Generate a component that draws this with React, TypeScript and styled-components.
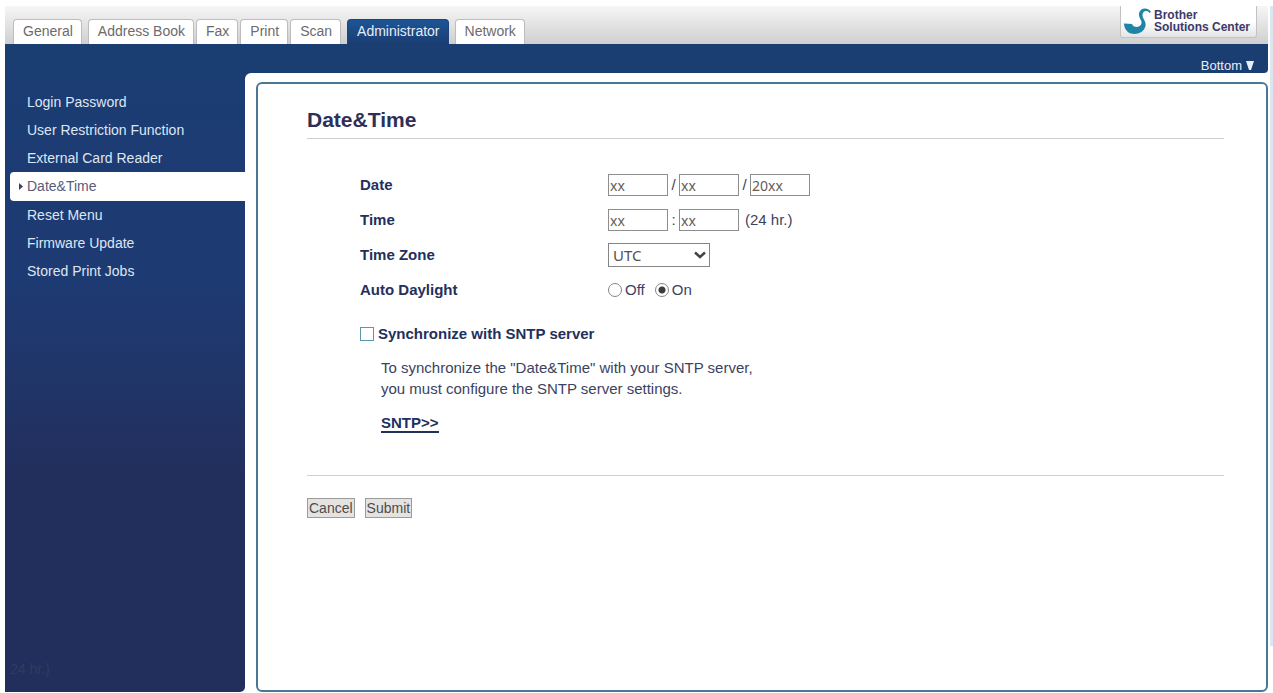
import React from 'react';
import styled, { createGlobalStyle } from 'styled-components';

const navy = '#23305c';

const GlobalStyle = createGlobalStyle`
  * { box-sizing: border-box; }
  body {
    margin: 0;
    background: #fff;
    color: #3c4260;
    font: 15px/21px "Liberation Sans", Arial, sans-serif;
  }
`;

const Page = styled.div`
  display: grid;
  grid-template-columns: 1fr 3px;
  column-gap: 2px;
  min-height: 100vh;
  padding: 6px 0 1px 5px;
`;

const Frame = styled.div`
  display: flex;
  flex-direction: column;
`;

const EdgeTrack = styled.div`
  margin-bottom: 46px;
  background: #dbe6f0;
`;

const Header = styled.header`
  display: flex;
  justify-content: space-between;
  align-items: flex-end;
  height: 38px;
  padding: 0 11px 0 8px;
  background: linear-gradient(#f6f6f6, #cfcfcf);
`;

const Tabs = styled.nav`
  display: flex;
  gap: 6px;
`;

const TabGroup = styled.div`
  display: flex;
  gap: 2px;
`;

const Tab = styled.a<{ $active?: boolean }>`
  height: 25px;
  padding: 0 8px 0 9px;
  border: 1px solid ${(p) => (p.$active ? '#1c4580' : '#bdbdbd')};
  border-bottom: 0;
  border-radius: 4px 4px 0 0;
  background: ${(p) => (p.$active ? 'linear-gradient(#1d5595, #1a3d72)' : '#fff')};
  color: ${(p) => (p.$active ? '#e6edf7' : '#6e6a6a')};
  font-size: 14px;
  line-height: 22px;
  text-decoration: none;
`;

const BrandLink = styled.a`
  display: flex;
  align-items: flex-start;
  gap: 3px;
  align-self: flex-start;
  height: 32px;
  padding: 1px 6px 0 3px;
  border: 1px solid #c2c2c4;
  border-top: 0;
  border-radius: 0 0 3px 3px;
  background: linear-gradient(#fff 50%, #e4e4e6);
  color: #3c3a68;
  font-size: 12px;
  font-weight: bold;
  line-height: 12px;
  text-decoration: none;

  span { padding-top: 2px; }
`;

const TopBar = styled.div`
  display: flex;
  justify-content: flex-end;
  align-items: flex-end;
  height: 29px;
  padding: 0 14px 0 0;
  border-radius: 0 0 4px 0;
  background: #1a3d72;
`;

const BottomLink = styled.a`
  display: flex;
  align-items: center;
  gap: 4px;
  color: #e8eef6;
  font-size: 13px;
  line-height: 15px;
  text-decoration: none;
`;

const Body = styled.div`
  display: flex;
  flex: 1;
  background: linear-gradient(90deg, #1a3d72 260px, #fff 260px) 0 0 / 100% 20px no-repeat;
`;

const Sidebar = styled.aside`
  display: flex;
  flex-direction: column;
  justify-content: space-between;
  flex: 0 0 240px;
  padding: 15px 0 12px 5px;
  border-radius: 0 0 5px 0;
  background: linear-gradient(#1b3d74, #1e3a72 35%, #222f5d 65%);
`;

const Menu = styled.ul`
  margin: 0;
  padding: 0;
  list-style: none;
`;

const MenuLink = styled.a<{ $active?: boolean }>`
  display: flex;
  align-items: center;
  height: ${(p) => (p.$active ? '29px' : '28px')};
  border-radius: 4px 0 0 4px;
  background: ${(p) => (p.$active ? '#fff' : 'transparent')};
  color: ${(p) => (p.$active ? '#5a5c7c' : '#dfe6f3')};
  font-size: 14px;
  text-decoration: none;
`;

const MenuMarker = styled.span`
  display: flex;
  justify-content: flex-end;
  width: 17px;
  padding-right: 4px;
`;

const Ghost = styled.div`
  color: #333b5c;
  font-size: 14px;
`;

const ContentArea = styled.main`
  display: flex;
  flex: 1;
  padding: 9px 0 0 11px;
  border-radius: 6px 0 0 0;
  background: #fff;
`;

const Panel = styled.div`
  flex: 1;
  padding: 23px 42px 24px 49px;
  border: 2px solid #4b7797;
  border-radius: 6px;
  background: #fff;
`;

const Title = styled.h1`
  margin: 0;
  padding-bottom: 6px;
  border-bottom: 1px solid #d0d0d4;
  color: #2e2f58;
  font-size: 21px;
  line-height: 25px;
`;

const Form = styled.form`
  display: flex;
  flex-direction: column;
`;

const Fields = styled.div`
  padding: 28px 0 42px 53px;
`;

const Row = styled.div`
  display: grid;
  grid-template-columns: 248px 1fr;
  align-items: center;
  height: 35px;
`;

const FieldName = styled.label`
  color: ${navy};
  font-weight: bold;
`;

const Controls = styled.div`
  display: flex;
  align-items: center;
`;

const Separator = styled.span`
  width: 11px;
  text-align: center;
`;

const TextBox = styled.input`
  width: 60px;
  height: 22px;
  padding: 1px 0 0 1px;
  border: 1px solid #8d8d8d;
  background: #fff;
  color: #645c58;
  font: 14px "Noto Sans", sans-serif;
`;

const Hint = styled.span`
  padding-left: 6px;
`;

const SelectWrap = styled.div`
  display: grid;
  align-items: center;
  width: 102px;

  > * { grid-area: 1 / 1; }
  svg { justify-self: end; margin-right: 4px; pointer-events: none; }
`;

const Select = styled.select`
  width: 100%;
  height: 24px;
  padding: 0 4px;
  border: 1px solid #858585;
  border-radius: 0;
  appearance: none;
  background: #fff;
  color: #55504e;
  font: 15px "Noto Sans", sans-serif;
`;

const Choice = styled.label`
  display: flex;
  align-items: center;
  gap: 3px;
  margin-right: 10px;
`;

const Radio = styled.input`
  width: 14px;
  height: 14px;
  margin: 0;
  border: 1px solid #858585;
  border-radius: 50%;
  appearance: none;
  background: #fff;

  &:checked { background: radial-gradient(circle, #3c3c3c 3px, #fff 4px); }
`;

const SyncLabel = styled.label`
  display: flex;
  align-items: center;
  gap: 4px;
  margin-top: 16px;
  color: ${navy};
  font-weight: bold;
`;

const Checkbox = styled.input`
  width: 14px;
  height: 14px;
  margin: 0;
  border: 1px solid #5c97b2;
  appearance: none;
  background: #fff;

  &:checked { background: #5c97b2; }
`;

const SyncDetails = styled.div`
  padding: 13px 0 0 21px;

  p { margin: 0 0 13px; }
`;

const SntpLink = styled.a`
  display: inline-block;
  border-bottom: 2px solid ${navy};
  color: ${navy};
  font-weight: bold;
  line-height: 17px;
  text-decoration: none;
`;

const Actions = styled.div`
  display: flex;
  gap: 10px;
  padding-top: 22px;
  border-top: 1px solid #d0d0d4;
`;

const Button = styled.button`
  height: 20px;
  padding: 0 1px;
  border: 1px solid #9b9b9b;
  background: #e4e3e1;
  color: #504c4c;
  font: 14px/18px "Liberation Sans", Arial, sans-serif;
`;

const menuItems = [
  'Login Password',
  'User Restriction Function',
  'External Card Reader',
  'Date&Time',
  'Reset Menu',
  'Firmware Update',
  'Stored Print Jobs',
];

const tabGroups = [['General'], ['Address Book', 'Fax', 'Print', 'Scan'], ['Administrator'], ['Network']];

export default function App() {
  return (
    <>
      <GlobalStyle />
      <Page>
        <Frame>
          <Header>
            <Tabs>
              {tabGroups.map((group) => (
                <TabGroup key={group[0]}>
                  {group.map((name) => (
                    <Tab key={name} href="#" $active={name === 'Administrator'}>{name}</Tab>
                  ))}
                </TabGroup>
              ))}
            </Tabs>
            <BrandLink href="#">
              <svg width="27" height="28" viewBox="0 0 27 28" aria-hidden="true">
                <path d="M25.5 6C23.5 3 18.5 3.5 18.5 8C18.5 12 22.5 14 21.5 19C20 25.500 13 28 7 26.500C3 25.500 0 21 0 16.500L8 17C9 21 16.500 21 17.500 16.500C18 13 14.500 11 15 6.500C16 0 24.500 0 27 5Z" fill="#1f84a6" />
              </svg>
              <span>Brother<br />Solutions Center</span>
            </BrandLink>
          </Header>
          <TopBar>
            <BottomLink href="#bottom">
              Bottom
              <svg width="8" height="9" viewBox="0 0 8 9" aria-hidden="true"><path d="M0 0H8L5 9H3Z" fill="#e8eef6" /></svg>
            </BottomLink>
          </TopBar>
          <Body>
            <Sidebar>
              <Menu>
                {menuItems.map((item) => {
                  const active = item === 'Date&Time';
                  return (
                    <li key={item}>
                      <MenuLink href="#" $active={active}>
                        <MenuMarker>
                          {active && <svg width="4" height="7" viewBox="0 0 4 7" aria-hidden="true"><path d="M0 0L4 3.5L0 7Z" fill="#3c3f60" /></svg>}
                        </MenuMarker>
                        {item}
                      </MenuLink>
                    </li>
                  );
                })}
              </Menu>
              <Ghost>24 hr.)</Ghost>
            </Sidebar>
            <ContentArea>
              <Panel>
                <Title>Date&amp;Time</Title>
                <Form onSubmit={(e: React.FormEvent) => e.preventDefault()}>
                  <Fields>
                    <Row>
                      <FieldName htmlFor="date-first">Date</FieldName>
                      <Controls>
                        <TextBox id="date-first" defaultValue="xx" />
                        <Separator>/</Separator>
                        <TextBox aria-label="Date, second part" defaultValue="xx" />
                        <Separator>/</Separator>
                        <TextBox aria-label="Year" defaultValue="20xx" />
                      </Controls>
                    </Row>
                    <Row>
                      <FieldName htmlFor="hours">Time</FieldName>
                      <Controls>
                        <TextBox id="hours" defaultValue="xx" />
                        <Separator>:</Separator>
                        <TextBox aria-label="Minutes" defaultValue="xx" />
                        <Hint>(24 hr.)</Hint>
                      </Controls>
                    </Row>
                    <Row>
                      <FieldName htmlFor="zone">Time Zone</FieldName>
                      <SelectWrap>
                        <Select id="zone"><option>UTC</option></Select>
                        <svg width="12" height="8" viewBox="0 0 12 8" aria-hidden="true">
                          <path d="M1 1.5L6 6L11 1.5" fill="none" stroke="#444" strokeWidth="2.5" />
                        </svg>
                      </SelectWrap>
                    </Row>
                    <Row role="radiogroup" aria-labelledby="daylight">
                      <FieldName as="span" id="daylight">Auto Daylight</FieldName>
                      <Controls>
                        <Choice><Radio type="radio" name="daylight" />Off</Choice>
                        <Choice><Radio type="radio" name="daylight" defaultChecked />On</Choice>
                      </Controls>
                    </Row>
                    <SyncLabel>
                      <Checkbox type="checkbox" />
                      Synchronize with SNTP server
                    </SyncLabel>
                    <SyncDetails>
                      <p>To synchronize the "Date&amp;Time" with your SNTP server,<br />you must configure the SNTP server settings.</p>
                      <SntpLink href="#">SNTP&gt;&gt;</SntpLink>
                    </SyncDetails>
                  </Fields>
                  <Actions>
                    <Button type="button">Cancel</Button>
                    <Button type="submit">Submit</Button>
                  </Actions>
                </Form>
              </Panel>
            </ContentArea>
          </Body>
        </Frame>
        <EdgeTrack />
      </Page>
    </>
  );
}
